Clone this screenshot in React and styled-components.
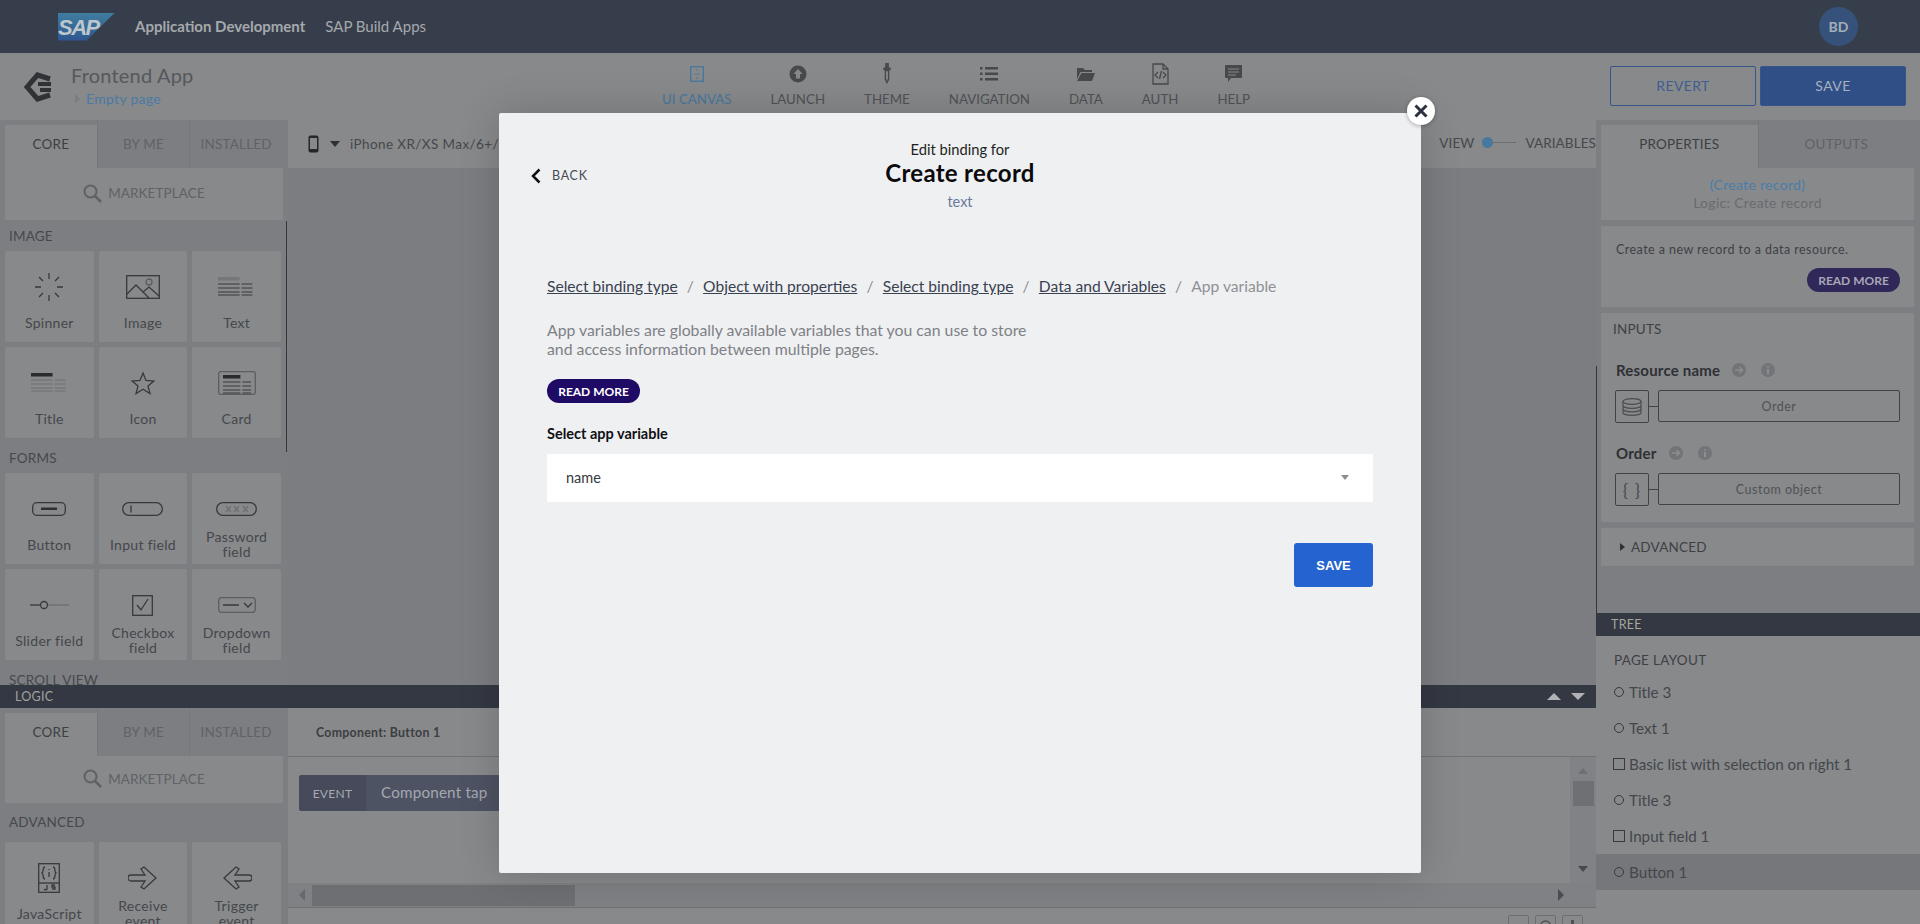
import { createGlobalStyle } from "styled-components";
import styled from "styled-components";

const font = `Lato, "Open Sans", sans-serif`;

const Global = createGlobalStyle`
  html, body { margin: 0; padding: 0; height: 100%; overflow: hidden; }
  body { font-family: ${font}; background: #7c7e82; }
  * { box-sizing: border-box; }
`;

const Page = styled.div`
  position: relative;
  width: 1920px;
  height: 924px;
  display: flex;
  flex-direction: column;
  overflow: hidden;
  color: #46484c;
  font-size: 14px;
`;

const TopBar = styled.header`
  height: 53px;
  flex: none;
  background: #373e4b;
  display: flex;
  align-items: center;
  padding-left: 58px;
  padding-right: 62px;
  color: #a5a9ad;
  font-size: 15px;
`;

const SapLogo = styled.div`
  width: 57px;
  height: 28px;
  margin-right: 20px;
  background: linear-gradient(180deg, #3f7d9f, #2e5590);
  clip-path: polygon(0 0, 100% 0, 50% 100%, 0 100%);
  color: #bcc6cd;
  font: italic 700 22px/29px "Liberation Sans", sans-serif;
  letter-spacing: -1.5px;
`;

const TopTitle = styled.span`
  font-weight: ${(p) => (p.$bold ? 700 : 400)};
  margin: 0 20px 2px 0;
`;

const Avatar = styled.div`
  margin-left: auto;
  width: 39px;
  height: 39px;
  border-radius: 50%;
  background: #36527a;
  display: flex;
  align-items: center;
  justify-content: center;
  font-weight: 700;
  font-size: 14px;
  color: #a4afbb;
`;

const AppBar = styled.div`
  height: 67px;
  flex: none;
  background: #87898b;
  display: flex;
  align-items: stretch;
`;

const AppInfo = styled.div`
  width: 662px;
  display: flex;
  align-items: center;
  padding-left: 24px;
  gap: 20px;
`;

const AppName = styled.div`
  font-size: 20px;
  line-height: 24px;
  letter-spacing: 0.2px;
  color: #55585c;
  margin-top: -3px;
`;

const PageCrumb = styled.div`
  display: flex;
  align-items: center;
  gap: 6px;
  margin-top: 3px;
  color: #4a7aa5;
  font-size: 14px;
  letter-spacing: 0.3px;
  &::before {
    content: "";
    border-left: 5px solid #7b7d80;
    border-top: 5px solid transparent;
    border-bottom: 5px solid transparent;
    margin-left: 4px;
  }
`;

const Nav = styled.nav`
  display: flex;
  gap: 39px;
`;

const NavItem = styled.div`
  display: flex;
  flex-direction: column;
  align-items: center;
  padding-top: 10px;
  font-size: 13.3px;
  gap: 6px;
  color: ${(p) => (p.$active ? "#47789f" : "#505256")};
  svg { display: block; height: 22px; }
`;

const Actions = styled.div`
  margin-left: auto;
  display: flex;
  gap: 4px;
  padding: 13px 14px 0 0;
`;

const BarButton = styled.div`
  width: 146px;
  height: 40px;
  padding-bottom: 2px;
  display: flex;
  align-items: center;
  justify-content: center;
  border-radius: 2px;
  border: 1px solid #36558a;
  font-size: 14px;
  letter-spacing: 0.4px;
  color: ${(p) => (p.$solid ? "#a7b1bf" : "#3f5d90")};
  background: ${(p) => (p.$solid ? "#2f4f86" : "transparent")};
`;

const Workspace = styled.div`
  flex: 1;
  display: flex;
  min-height: 0;
`;

const MainColumn = styled.div`
  width: 1596px;
  display: flex;
  flex-direction: column;
`;

const Row = styled.div`
  display: flex;
  height: ${(p) => p.$h}px;
  flex: none;
  overflow: hidden;
`;

const Palette = styled.aside`
  position: relative;
  width: 288px;
  flex: none;
  background: #7c7e82;
  overflow: hidden;
`;

const ScrollLine = styled.i`
  position: absolute;
  right: ${(p) => p.$right ?? 1}px;
  top: ${(p) => p.$top}px;
  height: ${(p) => p.$h}px;
  width: 1px;
  background: #33363c;
`;

const Tabs = styled.div`
  display: flex;
  height: 48px;
  padding: 0 6px 0 5px;
`;

const Tab = styled.div`
  flex: ${(p) => p.$grow ?? 1};
  display: flex;
  align-items: center;
  justify-content: center;
  font-size: 13.5px;
  letter-spacing: 0.2px;
  padding-bottom: ${(p) => (p.$active ? 5 : 0)}px;
  margin-top: ${(p) => (p.$active ? 5 : 0)}px;
  height: ${(p) => (p.$active ? 43 : 48)}px;
  background: ${(p) => (p.$active ? "#87898b" : "transparent")};
  color: ${(p) => (p.$active ? "#3e3f44" : "#606266")};
  & + & { border-left: 1px solid #75777a; }
`;

const Market = styled.div`
  height: ${(p) => p.$h}px;
  margin: 0 5px;
  padding-bottom: 2px;
  background: #87898b;
  display: flex;
  align-items: center;
  justify-content: center;
  gap: 6px;
  font-size: 13.5px;
  letter-spacing: 0.1px;
  color: #606266;
`;

const GroupLabel = styled.div`
  height: ${(p) => p.$h ?? 31}px;
  margin-top: ${(p) => p.$top ?? 0}px;
  padding: 6px 9px 0;
  line-height: 20px;
  font-size: 13.5px;
  letter-spacing: 0.2px;
  color: #46484c;
`;

const TileGrid = styled.div`
  display: grid;
  grid-template-columns: repeat(3, 1fr);
  grid-auto-rows: 91px;
  gap: 5px;
  width: 276px;
  margin-left: 5px;
`;

const Tile = styled.div`
  background: #87898b;
  border-radius: 2px;
  display: flex;
  flex-direction: column;
  align-items: center;
`;

const TileIcon = styled.div`
  height: 56px;
  padding-top: 16px;
  display: flex;
  align-items: center;
  justify-content: center;
`;

const TileLabel = styled.div`
  height: 30px;
  max-width: 72px;
  display: flex;
  align-items: center;
  justify-content: center;
  text-align: center;
  font-size: 14px;
  line-height: 15px;
  letter-spacing: 0.3px;
  color: #45474b;
`;

const Canvas = styled.div`
  flex: 1;
  background: #7b7d81;
`;

const CanvasBar = styled.div`
  height: 48px;
  background: #87898b;
  display: flex;
  align-items: center;
  padding-left: 20px;
  font-size: 13.5px;
  letter-spacing: 0.4px;
  color: #46484c;
`;

const DeviceArrow = styled.span`
  border-top: 6px solid #2f3035;
  border-left: 5px solid transparent;
  border-right: 5px solid transparent;
  margin: 0 10px 0 11px;
`;

const ViewToggle = styled.div`
  margin-left: auto;
  display: flex;
  align-items: center;
  margin-top: -3px;
  letter-spacing: 0.1px;
`;

const ToggleTrack = styled.span`
  position: relative;
  width: 34px;
  height: 1px;
  background: #6c6e71;
  margin: 0 9px 0 8px;
  &::before {
    content: "";
    position: absolute;
    left: 0;
    top: -5px;
    width: 11px;
    height: 11px;
    border-radius: 50%;
    background: #47789f;
  }
`;

const LogicBar = styled.div`
  height: 23px;
  flex: none;
  background: #343843;
  display: flex;
  align-items: center;
  padding: 0 11px 0 15px;
  font-size: 12.5px;
  color: #a0a2a0;
  letter-spacing: 0.3px;
`;

const Caret = styled.span`
  width: 0;
  height: 0;
  border-left: ${(p) => p.$s ?? 7}px solid transparent;
  border-right: ${(p) => p.$s ?? 7}px solid transparent;
  border-bottom: ${(p) => (p.$up ? `${p.$h ?? 7}px solid ${p.$c ?? "#b0b2b5"}` : "none")};
  border-top: ${(p) => (p.$up ? "none" : `${p.$h ?? 7}px solid ${p.$c ?? "#b0b2b5"}`)};
`;

const BarCarets = styled.div`
  margin-left: auto;
  display: flex;
  gap: 10px;
  align-items: center;
`;

const LogicEditor = styled.div`
  flex: 1;
  display: flex;
  flex-direction: column;
  background: #87898b;
`;

const EditorHead = styled.div`
  height: 49px;
  flex: none;
  border-bottom: 1px solid #707276;
  display: flex;
  align-items: center;
  padding-left: 28px;
  font-size: 12.3px;
  font-weight: 700;
  letter-spacing: 0.3px;
  color: #3d3e42;
`;

const EditorBody = styled.div`
  height: 126px;
  flex: none;
  display: flex;
  justify-content: space-between;
`;

const EventChip = styled.div`
  display: flex;
  height: 36px;
  margin: 18px 0 0 11px;
  border-radius: 2px;
  overflow: hidden;
  width: 400px;
`;

const EventTag = styled.div`
  width: 67px;
  display: flex;
  align-items: center;
  justify-content: center;
  background: #464a5a;
  color: #a8aab0;
  font-size: 12px;
  letter-spacing: 0.3px;
`;

const EventName = styled.div`
  flex: 1;
  display: flex;
  align-items: center;
  padding: 0 0 2px 15px;
  background: #4e5364;
  color: #a5a8b0;
  font-size: 15.2px;
  letter-spacing: 0.2px;
`;

const VScroll = styled.div`
  width: 26px;
  background: #808285;
  display: flex;
  flex-direction: column;
  align-items: center;
  padding: 11px 0;
`;

const VThumb = styled.div`
  width: 21px;
  height: 25px;
  margin: 7px 0 auto;
  background: #6e7073;
`;

const HScroll = styled.div`
  height: 24px;
  flex: none;
  background: #7f8184;
  display: flex;
  align-items: center;
  padding: 0 32px 0 11px;
  gap: 7px;
`;

const HThumb = styled.div`
  width: 263px;
  height: 21px;
  background: #6d6f72;
  margin-right: auto;
`;

const SideCaret = styled.span`
  width: 0;
  height: 0;
  border-top: 6px solid transparent;
  border-bottom: 6px solid transparent;
  border-left: ${(p) => (p.$left ? "none" : "6px solid #4a4c50")};
  border-right: ${(p) => (p.$left ? "6px solid #66686b" : "none")};
`;

const ZoomBar = styled.div`
  flex: 1;
  border-top: 1px solid #6f7175;
  display: flex;
  justify-content: flex-end;
  gap: 6px;
  padding: 7px 13px 0 0;
`;

const ZoomButton = styled.div`
  width: 21px;
  height: 24px;
  padding: 2px 0 0 2px;
  border: 1px solid #6c6e71;
  border-radius: 2px;
`;

const Inspector = styled.aside`
  position: relative;
  flex: 1;
  display: flex;
  flex-direction: column;
`;

const Properties = styled.div`
  height: 493px;
  flex: none;
  background: #7c7e82;
  display: flex;
  flex-direction: column;
  gap: 6px;
  overflow: hidden;
  > div:first-child { margin-bottom: -6px; }
`;

const Card = styled.section`
  margin: 0 6px 0 5px;
  background: #87898b;
  height: ${(p) => (p.$h ? `${p.$h}px` : "auto")};
`;

const Centered = styled.div`
  padding-top: 8px;
  text-align: center;
  line-height: 18px;
  letter-spacing: 0.3px;
  color: #696b6f;
`;

const BlueText = styled.div`
  color: #4a7da8;
`;

const CardText = styled.div`
  padding: 15px 0 0 15px;
  font-size: 12.5px;
  letter-spacing: 0.45px;
  line-height: 18px;
  color: #404146;
`;

const Pill = styled.div`
  width: 93px;
  height: 24px;
  border-radius: 12px;
  display: flex;
  align-items: center;
  justify-content: center;
  font-size: 12px;
  font-weight: 700;
  color: ${(p) => (p.$bright ? "#ffffff" : "#a8a6b8")};
  background: ${(p) => (p.$bright ? "#1f0a66" : "#302858")};
  margin: ${(p) => p.$m ?? 0};
`;

const CardHead = styled.div`
  height: 31px;
  display: flex;
  align-items: center;
  padding-left: 12px;
  font-size: 13.5px;
  letter-spacing: 0.2px;
  color: #3f4045;
`;

const InputName = styled.div`
  display: flex;
  align-items: center;
  height: 20px;
  margin: ${(p) => p.$m};
  font-size: 15px;
  font-weight: 700;
  letter-spacing: 0.2px;
  color: #2f3034;
  padding-left: 15px;
`;

const HintDot = styled.span`
  width: 14px;
  height: 14px;
  border-radius: 50%;
  background: #727477;
  margin-left: ${(p) => p.$gap}px;
  display: flex;
  svg { display: block; }
`;

const InputRow = styled.div`
  display: flex;
  align-items: flex-start;
  margin: 10px 0 0 14px;
`;

const InputIcon = styled.div`
  width: 34px;
  height: 33px;
  border: 1px solid #404246;
  border-radius: 2px;
  display: flex;
  align-items: center;
  justify-content: center;
  font-size: 18px;
  letter-spacing: 1px;
  color: #4b4d51;
`;

const Connector = styled.span`
  width: 9px;
  height: 1px;
  margin-top: 16px;
  background: #404246;
`;

const InputField = styled.div`
  width: 242px;
  height: 32px;
  border: 1px solid #404246;
  border-radius: 2px;
  display: flex;
  align-items: center;
  justify-content: center;
  font-size: 12.5px;
  letter-spacing: 0.5px;
  color: #505256;
`;

const AdvancedHead = styled.div`
  height: 38px;
  display: flex;
  align-items: center;
  gap: 6px;
  padding: 0 0 0 19px;
  font-size: 13.5px;
  letter-spacing: 0.2px;
  color: #3f4045;
  &::before {
    content: "";
    border-left: 5px solid #303135;
    border-top: 4px solid transparent;
    border-bottom: 4px solid transparent;
  }
`;

const TreeBar = styled.div`
  height: 23px;
  flex: none;
  background: #343843;
  display: flex;
  align-items: center;
  padding-left: 15px;
  font-size: 12.5px;
  letter-spacing: 0.3px;
  color: #a5a69e;
`;

const Tree = styled.div`
  flex: 1;
  background: #87898b;
`;

const TreeHead = styled.div`
  height: 38px;
  padding: 14px 0 0 18px;
  line-height: 20px;
  font-size: 13.5px;
  letter-spacing: 0.3px;
  color: #3f4045;
`;

const TreeRow = styled.div`
  height: 36px;
  display: flex;
  align-items: center;
  padding-left: 18px;
  gap: 5px;
  font-size: 15.2px;
  color: #44464c;
  background: ${(p) => (p.$selected ? "#75777b" : "transparent")};
`;

const TreeMark = styled.span`
  flex: none;
  width: 10px;
  height: 10px;
  display: flex;
  align-items: center;
  justify-content: center;
  &::before {
    content: "";
    flex: none;
    width: ${(p) => (p.$box ? 10 : 8)}px;
    height: ${(p) => (p.$box ? 10 : 8)}px;
    border: 1.5px solid #38393d;
    border-radius: ${(p) => (p.$box ? 0 : "50%")};
  }
`;

const Modal = styled.div`
  position: absolute;
  left: 499px;
  top: 113px;
  width: 922px;
  height: 760px;
  background: #eff0f2;
  border-radius: 2px;
  box-shadow: 0 0 40px rgba(0, 0, 0, 0.18);
  display: flex;
  flex-direction: column;
`;

const CloseButton = styled.div`
  position: absolute;
  right: -14px;
  top: -16px;
  width: 28px;
  height: 28px;
  border-radius: 50%;
  background: #ffffff;
  display: flex;
  align-items: center;
  justify-content: center;
  box-shadow: 0 1px 4px rgba(0, 0, 0, 0.3);
`;

const ModalHead = styled.div`
  display: grid;
  grid-template-columns: 1fr auto 1fr;
  align-items: center;
  padding: 27px 32px 0;
`;

const BackLink = styled.div`
  display: flex;
  align-items: center;
  gap: 11px;
  font-size: 12.5px;
  letter-spacing: 0.7px;
  color: #484b55;
`;

const ModalTitles = styled.div`
  text-align: center;
`;

const EditFor = styled.div`
  font-size: 14.7px;
  line-height: 18px;
  color: #1e1f22;
`;

const ModalTitle = styled.h1`
  margin: 0;
  font-size: 24px;
  line-height: 30px;
  font-weight: 700;
  letter-spacing: 0.3px;
  color: #0b0b0e;
`;

const ModalSub = styled.div`
  margin-top: 5px;
  line-height: 18px;
  font-size: 14.5px;
  color: #6a7a9c;
`;

const ModalBody = styled.div`
  padding: 65px 48px 0;
  display: flex;
  flex-direction: column;
  align-items: flex-start;
`;

const Crumbs = styled.div`
  display: flex;
  line-height: 20px;
  font-size: 15.6px;
  color: #8e9096;
`;

const CrumbLink = styled.a`
  color: #3a4150;
  text-decoration: underline;
`;

const CrumbSep = styled.span`
  margin: 0 9.2px;
`;

const Description = styled.p`
  margin: 24px 0 21px;
  line-height: 19px;
  font-size: 15.8px;
  color: #7e8186;
`;

const FieldLabel = styled.div`
  margin-top: 22px;
  line-height: 18px;
  font-size: 14.5px;
  font-weight: 700;
  color: #101014;
`;

const Select = styled.div`
  margin-top: 11px;
  width: 100%;
  height: 48px;
  padding: 0 24px 2px 19px;
  background: #ffffff;
  display: flex;
  align-items: center;
  justify-content: space-between;
  font-size: 14.5px;
  color: #37383c;
`;

const SaveButton = styled.button`
  align-self: flex-end;
  margin-top: 41px;
  width: 79px;
  height: 44px;
  border: 0;
  border-radius: 3px;
  background: #2563d0;
  color: #ffffff;
  font: 700 13px "Liberation Sans", sans-serif;
`;

const ic = { fill: "none", stroke: "#38393d", strokeWidth: 1.3 };

const Svg = ({ w, h, children }) => (
  <svg width={w} height={h} viewBox={`0 0 ${w} ${h}`} {...ic}>
    {children}
  </svg>
);

const TextLines = ({ x = 0, y = 0, w = 36, head = "#75777a", line = "#38393d" }) => (
  <g>
    <rect x={x} y={y} width={w * 0.6} height="3.5" fill={head} stroke="none" />
    {[7, 11, 15, 18].map((d) => (
      <line key={d} x1={x} x2={x + w} y1={y + d} y2={y + d} stroke={line} strokeWidth="1" strokeDasharray={`${w * 0.6} 2 ${w * 0.3} 2`} />
    ))}
  </g>
);

const tileIcons = {
  spinner: (
    <Svg w={30} h={30}>
      <path d="M15 1v6M15 23v6M1 15h6M23 15h6M5 5l4 4M21 21l4 4M25 5l-4 4M9 21l-4 4" />
    </Svg>
  ),
  image: (
    <Svg w={34} h={24}>
      <rect x=".7" y=".7" width="32.6" height="22.6" />
      <path d="M1 19l9-9 13 13M17 17l6-5 10 9" />
      <circle cx="23" cy="7" r="3" stroke="#5c5e62" />
    </Svg>
  ),
  text: (
    <Svg w={37} h={20}>
      <TextLines w={36} />
    </Svg>
  ),
  title: (
    <Svg w={37} h={20}>
      <TextLines w={36} head="#2a2b2e" line="#6d6f72" />
    </Svg>
  ),
  icon: (
    <Svg w={24} h={24}>
      <path d="M12 2l3 7.500 8 .5-6 5 2 7.500-7-4.200-7 4.200 2-7.500-6-5 8-.5z" />
    </Svg>
  ),
  card: (
    <Svg w={38} h={24}>
      <rect x=".7" y=".7" width="36.6" height="22.6" rx="2" stroke="#5c5e62" />
      <TextLines x={5} y={4} w={29} head="#2a2b2e" />
    </Svg>
  ),
  button: (
    <Svg w={34} h={14}>
      <rect x=".7" y=".7" width="32.6" height="12.6" rx="4" />
      <rect x="9" y="5.500" width="16" height="2.500" fill="#2f3034" stroke="none" />
    </Svg>
  ),
  input: (
    <Svg w={41} h={14}>
      <rect x=".7" y=".7" width="39.6" height="12.6" rx="6" />
      <line x1="9" x2="9" y1="3.500" y2="10.500" />
    </Svg>
  ),
  password: (
    <Svg w={41} h={14}>
      <rect x=".7" y=".7" width="39.6" height="12.6" rx="6" />
      <path d="M10 4l5 6M15 4l-5 6M18 4l5 6M23 4l-5 6M27 4l5 6M32 4l-5 6" stroke="#6d6f72" />
    </Svg>
  ),
  slider: (
    <Svg w={39} h={10}>
      <path d="M0 5h10" />
      <line x1="18" x2="39" y1="5" y2="5" stroke="#6d6f72" />
      <circle cx="14" cy="5" r="3.500" />
    </Svg>
  ),
  checkbox: (
    <Svg w={21} h={21}>
      <rect x=".7" y=".7" width="19.6" height="19.6" />
      <path d="M5 10l4 5 7-11" />
    </Svg>
  ),
  dropdown: (
    <Svg w={38} h={16}>
      <rect x=".7" y=".7" width="36.6" height="14.6" rx="3" stroke="#5c5e62" />
      <path d="M5 8h16M26 6l4 4 4-4" />
    </Svg>
  ),
  javascript: (
    <svg width="22" height="30" viewBox="0 0 22 30" {...ic}>
      <rect x=".7" y=".7" width="20.6" height="28.6" />
      <line x1="1" x2="21" y1="20" y2="20" />
      <path d="M7 4c-3 0-1 5-3 6 2 1 0 6 3 6M15 4c3 0 1 5 3 6-2 1 0 6-3 6M11 9v5M11 6v1" />
      <path d="M9 22v4c0 1-2 1-3 0M17 22h-3v2h3v2h-3" />
    </svg>
  ),
  receive: (
    <Svg w={30} h={24}>
      <path d="M3 9h14l-4-6 3-2 12 11-12 11-3-2 4-6H3a3 3 0 0 1 0-6z" />
    </Svg>
  ),
  trigger: (
    <Svg w={30} h={24}>
      <path d="M27 9H13l4-6-3-2L2 12l12 11 3-2-4-6h14a3 3 0 0 0 0-6z" />
    </Svg>
  ),
};

const imageTiles = [
  ["Spinner", "spinner"],
  ["Image", "image"],
  ["Text", "text"],
  ["Title", "title"],
  ["Icon", "icon"],
  ["Card", "card"],
];

const formTiles = [
  ["Button", "button"],
  ["Input field", "input"],
  ["Password field", "password"],
  ["Slider field", "slider"],
  ["Checkbox field", "checkbox"],
  ["Dropdown field", "dropdown"],
];

const logicTiles = [
  ["JavaScript", "javascript"],
  ["Receive event", "receive"],
  ["Trigger event", "trigger"],
];

const treeRows = [
  ["Title 3"],
  ["Text 1"],
  ["Basic list with selection on right 1", true],
  ["Title 3"],
  ["Input field 1", true],
  ["Button 1", false, true],
];

const navFill = { fill: "#47494d", stroke: "none" };

const navItems = [
  {
    label: "UI CANVAS",
    active: true,
    icon: (
      <svg width="14" height="16" viewBox="0 0 14 16" fill="none" stroke="#47789f" strokeWidth="1.4">
        <rect x=".7" y=".7" width="12.6" height="14.6" />
        <path d="M7 3v2M7 7v2M7 11v2M4 8h1.500M8.500 8H10" strokeWidth="1" />
      </svg>
    ),
  },
  {
    label: "LAUNCH",
    icon: (
      <svg width="18" height="18" viewBox="0 0 18 18">
        <circle cx="9" cy="9" r="8.500" {...navFill} />
        <path d="M9 4l4.500 5H11v4.500H7V9H4.500z" fill="#87898b" />
      </svg>
    ),
  },
  {
    label: "THEME",
    icon: (
      <svg width="10" height="24" viewBox="0 0 10 24">
        <path d="M3 0h4v5h2v3H7.500v10L5 23l-2.500-5V8H1V5h2z" {...navFill} />
        <path d="M4 9h2v8l-1 3-1-3z" fill="#87898b" />
      </svg>
    ),
  },
  {
    label: "NAVIGATION",
    icon: (
      <svg width="18" height="16" viewBox="0 0 18 16">
        <path d="M0 1h2.500v2.500H0zM5 1h13v2.500H5zM0 6.500h2.500V9H0zM5 6.500h13V9H5zM0 12h2.500v2.500H0zM5 12h13v2.500H5z" {...navFill} />
      </svg>
    ),
  },
  {
    label: "DATA",
    icon: (
      <svg width="18" height="16" viewBox="0 0 18 16">
        <path d="M0 2h6l2 2h7v2H3.500L0 13z" {...navFill} />
        <path d="M4.500 7H18l-3 8H0z" {...navFill} />
      </svg>
    ),
  },
  {
    label: "AUTH",
    icon: (
      <svg width="17" height="22" viewBox="0 0 17 22" fill="none" stroke="#47494d" strokeWidth="1.3">
        <path d="M1 1h10l5 5v15H1zM11 1v5h5M6 9l-3 3 3 3M11 9l3 3-3 3M9.500 8l-2 8" />
      </svg>
    ),
  },
  {
    label: "HELP",
    icon: (
      <svg width="17" height="18" viewBox="0 0 17 18">
        <path d="M1 0h15a1 1 0 0 1 1 1v11a1 1 0 0 1-1 1H6l-3 4v-4H1a1 1 0 0 1-1-1V1a1 1 0 0 1 1-1z" {...navFill} />
        <path d="M3 4h11M3 7h11M3 10h8" stroke="#87898b" />
      </svg>
    ),
  },
];

const SearchIcon = () => (
  <svg width="19" height="19" viewBox="0 0 19 19" fill="none" stroke="#5f6165" strokeWidth="2">
    <circle cx="7.500" cy="7.500" r="6" />
    <path d="M12 12l6 6" strokeWidth="2.500" />
  </svg>
);

const ArrowHint = () => (
  <HintDot $gap={12}>
    <svg width="14" height="14" viewBox="0 0 14 14" fill="none" stroke="#8c8e90" strokeWidth="1.6">
      <path d="M3 7h7M7.500 4l3 3-3 3" />
    </svg>
  </HintDot>
);

const InfoHint = () => (
  <HintDot $gap={15}>
    <svg width="14" height="14" viewBox="0 0 14 14" fill="none" stroke="#8c8e90" strokeWidth="2">
      <path d="M7 6v5M7 3v1.500" />
    </svg>
  </HintDot>
);

const Tiles = ({ items }) => (
  <TileGrid>
    {items.map(([label, icon]) => (
      <Tile key={label}>
        <TileIcon>{tileIcons[icon]}</TileIcon>
        <TileLabel>{label}</TileLabel>
      </Tile>
    ))}
  </TileGrid>
);

const PaletteTabs = () => (
  <Tabs>
    <Tab $active>CORE</Tab>
    <Tab>BY ME</Tab>
    <Tab>INSTALLED</Tab>
  </Tabs>
);

export default function App() {
  return (
    <Page>
      <Global />
      <TopBar>
        <SapLogo>SAP</SapLogo>
        <TopTitle $bold>Application Development</TopTitle>
        <TopTitle>SAP Build Apps</TopTitle>
        <Avatar>BD</Avatar>
      </TopBar>

      <AppBar>
        <AppInfo>
          <svg width="27" height="30" viewBox="0 0 27 30" fill="none" stroke="#303236" strokeWidth="5">
            <path d="M26 7L13.500 3 3 15l10.500 12L26 23" />
            <path d="M14 12h13M16 18h11" strokeWidth="4" />
          </svg>
          <div>
            <AppName>Frontend App</AppName>
            <PageCrumb>Empty page</PageCrumb>
          </div>
        </AppInfo>
        <Nav>
          {navItems.map((item) => (
            <NavItem key={item.label} $active={item.active}>
              {item.icon}
              {item.label}
            </NavItem>
          ))}
        </Nav>
        <Actions>
          <BarButton>REVERT</BarButton>
          <BarButton $solid>SAVE</BarButton>
        </Actions>
      </AppBar>

      <Workspace>
        <MainColumn>
          <Row $h={565}>
            <Palette>
              <PaletteTabs />
              <Market $h={52}>
                <SearchIcon />
                MARKETPLACE
              </Market>
              <GroupLabel>IMAGE</GroupLabel>
              <Tiles items={imageTiles} />
              <GroupLabel $top={4}>FORMS</GroupLabel>
              <Tiles items={formTiles} />
              <GroupLabel $top={4}>SCROLL VIEW</GroupLabel>
              <ScrollLine $top={101} $h={231} />
            </Palette>
            <Canvas>
              <CanvasBar>
                <svg width="11" height="18" viewBox="0 0 11 18">
                  <rect x=".5" y=".5" width="10" height="17" rx="2" fill="#26272a" />
                  <rect x="2" y="3" width="7" height="11" fill="#87898b" />
                </svg>
                <DeviceArrow />
                iPhone XR/XS Max/6+/7+/8+ (414 x 736)
                <ViewToggle>
                  VIEW
                  <ToggleTrack />
                  VARIABLES
                </ViewToggle>
              </CanvasBar>
            </Canvas>
          </Row>
          <LogicBar>
            LOGIC
            <BarCarets>
              <Caret $up />
              <Caret />
            </BarCarets>
          </LogicBar>
          <Row $h={216}>
            <Palette>
              <PaletteTabs />
              <Market $h={47}>
                <SearchIcon />
                MARKETPLACE
              </Market>
              <GroupLabel $top={3} $h={36}>ADVANCED</GroupLabel>
              <Tiles items={logicTiles} />
            </Palette>
            <LogicEditor>
              <EditorHead>Component: Button 1</EditorHead>
              <EditorBody>
                <EventChip>
                  <EventTag>EVENT</EventTag>
                  <EventName>Component tap</EventName>
                </EventChip>
                <VScroll>
                  <Caret $up $s={5} $h={6} $c="#6d6f72" />
                  <VThumb />
                  <Caret $s={5} $h={6} $c="#47494d" />
                </VScroll>
              </EditorBody>
              <HScroll>
                <SideCaret $left />
                <HThumb />
                <SideCaret />
              </HScroll>
              <ZoomBar>
                <ZoomButton>
                  <svg width="15" height="14" viewBox="0 0 15 14">
                    <rect x="2" y="6" width="11" height="3" fill="#505256" />
                  </svg>
                </ZoomButton>
                <ZoomButton>
                  <svg width="15" height="14" viewBox="0 0 15 14" fill="none" stroke="#505256" strokeWidth="1.500">
                    <circle cx="7.500" cy="8" r="5" />
                  </svg>
                </ZoomButton>
                <ZoomButton>
                  <svg width="15" height="14" viewBox="0 0 15 14">
                    <path d="M6 2h3v4h4v3H9v5H6V9H2V6h4z" fill="#505256" />
                  </svg>
                </ZoomButton>
              </ZoomBar>
            </LogicEditor>
          </Row>
        </MainColumn>

        <Inspector>
          <Properties>
            <Tabs>
              <Tab $active $grow={157}>PROPERTIES</Tab>
              <Tab $grow={156}>OUTPUTS</Tab>
            </Tabs>
            <Card $h={52}>
              <Centered>
                <BlueText>(Create record)</BlueText>
                Logic: Create record
              </Centered>
            </Card>
            <Card $h={81}>
              <CardText>Create a new record to a data resource.</CardText>
              <Pill $m="9px 0 0 206px">READ MORE</Pill>
            </Card>
            <Card $h={209}>
              <CardHead>INPUTS</CardHead>
              <InputName $m="16px 0 0">
                Resource name
                <ArrowHint />
                <InfoHint />
              </InputName>
              <InputRow>
                <InputIcon>
                  <svg width="20" height="18" viewBox="0 0 20 18" fill="none" stroke="#4b4d51" strokeWidth="1.2">
                    <ellipse cx="10" cy="3.500" rx="9" ry="2.800" />
                    <path d="M1 3.500v11c0 1.500 4 2.800 9 2.800s9-1.300 9-2.800v-11M1 7.500c0 1.500 4 2.800 9 2.800s9-1.300 9-2.800M1 11c0 1.500 4 2.800 9 2.800s9-1.300 9-2.800" />
                  </svg>
                </InputIcon>
                <Connector />
                <InputField>Order</InputField>
              </InputRow>
              <InputName $m="20px 0 0">
                Order
                <ArrowHint />
                <InfoHint />
              </InputName>
              <InputRow>
                <InputIcon>{"{ }"}</InputIcon>
                <Connector />
                <InputField>Custom object</InputField>
              </InputRow>
            </Card>
            <Card>
              <AdvancedHead>ADVANCED</AdvancedHead>
            </Card>
          </Properties>
          <TreeBar>TREE</TreeBar>
          <Tree>
            <TreeHead>PAGE LAYOUT</TreeHead>
            {treeRows.map(([label, box, selected], i) => (
              <TreeRow key={i} $selected={selected}>
                <TreeMark $box={box} />
                {label}
              </TreeRow>
            ))}
          </Tree>
          <ScrollLine $right={323} $top={246} $h={267} />
        </Inspector>
      </Workspace>

      <Modal>
        <CloseButton>
          <svg width="14" height="14" viewBox="0 0 14 14" stroke="#2c3140" strokeWidth="3" fill="none">
            <path d="M1.500 1.500l11 11M12.500 1.500l-11 11" />
          </svg>
        </CloseButton>
        <ModalHead>
          <BackLink>
            <svg width="10" height="16" viewBox="0 0 10 16" fill="none" stroke="#111" strokeWidth="2.500">
              <path d="M8.500 1.500L2 8l6.500 6.500" />
            </svg>
            BACK
          </BackLink>
          <ModalTitles>
            <EditFor>Edit binding for</EditFor>
            <ModalTitle>Create record</ModalTitle>
            <ModalSub>text</ModalSub>
          </ModalTitles>
        </ModalHead>
        <ModalBody>
          <Crumbs>
            <CrumbLink>Select binding type</CrumbLink>
            <CrumbSep>/</CrumbSep>
            <CrumbLink>Object with properties</CrumbLink>
            <CrumbSep>/</CrumbSep>
            <CrumbLink>Select binding type</CrumbLink>
            <CrumbSep>/</CrumbSep>
            <CrumbLink>Data and Variables</CrumbLink>
            <CrumbSep>/</CrumbSep>
            App variable
          </Crumbs>
          <Description>
            App variables are globally available variables that you can use to store
            <br />
            and access information between multiple pages.
          </Description>
          <Pill $bright>READ MORE</Pill>
          <FieldLabel>Select app variable</FieldLabel>
          <Select>
            name
            <Caret $s={4.5} $h={5} $c="#8b8d92" />
          </Select>
          <SaveButton>SAVE</SaveButton>
        </ModalBody>
      </Modal>
    </Page>
  );
}
